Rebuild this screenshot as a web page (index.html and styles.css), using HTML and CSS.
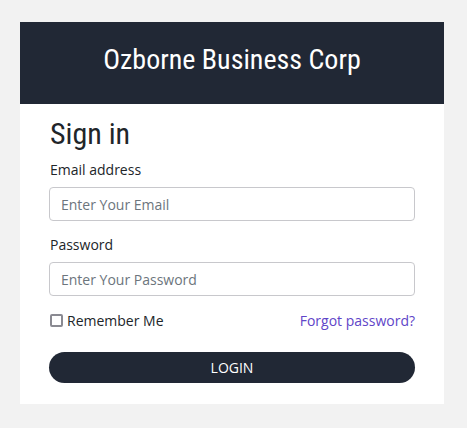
FILE: index.html
```html
<!DOCTYPE html>
<html lang="en">
<head>
  <meta charset="UTF-8">
  <meta name="viewport" content="width=device-width, initial-scale=1.0">
  <title>Sign in</title>
  <link rel="stylesheet" href="styles.css">
</head>
<body>

  <div class="login-card">
    <div class="login-header">
      <h1>Ozborne Business Corp</h1>
    </div>

    <form class="login-form">
      <h2>Sign in</h2>

      <!-- Email Field -->
      <div class="form-group">
        <label for="email">Email address</label>
        <input type="email" id="email" name="email" placeholder="Enter Your Email">
      </div>

      <!-- Password Field -->
      <div class="form-group">
        <label for="password">Password</label>
        <input type="password" id="password" name="password" placeholder="Enter Your Password">
      </div>

      <!-- Remember / Forgot -->
      <div class="form-options">
        <label class="remember"><input type="checkbox" name="remember"> Remember Me</label>
        <a href="#" class="forgot">Forgot password?</a>
      </div>

      <button type="submit" class="btn-login">Login</button>
    </form>
  </div>

</body>
</html>
```

FILE: styles.css
```css
body {
  font-family: "Open Sans", Arial, sans-serif;
  background-color: #f2f2f2;
  margin: 0;
  padding: 22px 0 0 20px;
  color: #212529;
}

.login-card {
  width: 424px;
  background-color: #fff;
}

.login-header {
  background-color: #212835;
  padding: 21px 0 28px;
  text-align: center;
}

.login-header h1 {
  margin: 0;
  font-family: Roboto, sans-serif;
  font-weight: 400;
  font-size: 28px;
  font-stretch: condensed;
  color: #fff;
}

.login-form {
  padding: 12px 29px 21px 29px;
}

h2 {
  margin: 0 0 7px 1px;
  font-family: Roboto, sans-serif;
  font-weight: 400;
  font-size: 30px;
  line-height: 36px;
  font-stretch: condensed;
  color: #212529;
}

.form-group {
  margin-bottom: 13px;
}

.form-group label {
  display: block;
  font-size: 14px;
  line-height: 21px;
  margin: 0 0 7px 1px;
}

.form-group input {
  display: block;
  width: 100%;
  height: 34px;
  box-sizing: border-box;
  padding: 0 11px;
  border: 1px solid #c8c8cc;
  border-radius: 4px;
  font-family: inherit;
  font-size: 14px;
  color: #495057;
}

.form-group input::placeholder {
  color: #6c757d;
}

.form-options {
  display: flex;
  justify-content: space-between;
  align-items: center;
  margin-top: 14px;
  font-size: 14px;
  line-height: 21px;
}

.remember {
  display: flex;
  align-items: center;
  gap: 4px;
}

.remember input {
  appearance: none;
  margin: 0 0 0 1px;
  width: 13px;
  height: 13px;
  box-sizing: border-box;
  border: 2px solid #8a8a92;
  border-radius: 2px;
  background-color: #fff;
}

.forgot {
  color: #6045c8;
  text-decoration: none;
}

.btn-login {
  display: block;
  width: 100%;
  height: 31px;
  margin-top: 21px;
  border: none;
  border-radius: 16px;
  background-color: #212835;
  color: #fff;
  font-family: inherit;
  font-size: 14px;
  text-transform: uppercase;
  cursor: pointer;
}
```
